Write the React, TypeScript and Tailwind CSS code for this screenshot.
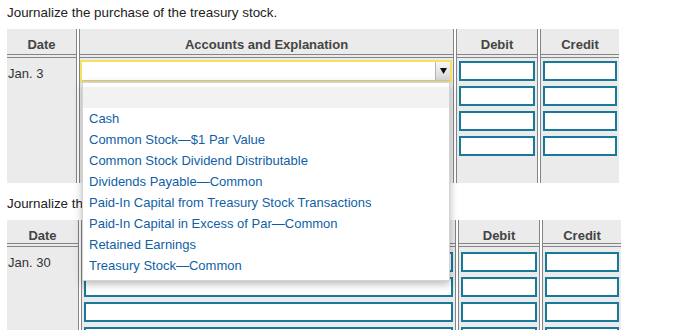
import React from 'react'

const accounts = [
  'Cash',
  'Common Stock\u2014$1 Par Value',
  'Common Stock Dividend Distributable',
  'Dividends Payable\u2014Common',
  'Paid-In Capital from Treasury Stock Transactions',
  'Paid-In Capital in Excess of Par\u2014Common',
  'Retained Earnings',
  'Treasury Stock\u2014Common',
]

const sep = 'border-l-4 border-double border-[#858585]'
const head =
  'border-b-4 border-double border-[#858585] bg-[#ebebeb] pt-[8px] text-center text-[13px] font-bold leading-[15px] text-[#444]'

function Box() {
  return <div className="h-[20px] w-full border-2 border-[#187a9b] bg-white" />
}

function Boxes({ count }: { count: number }) {
  return (
    <div className="flex flex-col gap-[5px] px-[2px]">
      {Array.from({ length: count }).map((_, i) => (
        <Box key={i} />
      ))}
    </div>
  )
}

function AccountSelect() {
  return (
    <div className="relative mr-[1px] h-[23px] border-2 border-[#f8e065]">
      <div className="flex h-[19px] border-b border-[#c8c8c8] bg-white">
        <div className="flex-1" />
        <div className="flex w-[15px] items-center justify-center border-l border-[#b5b5b5] bg-gradient-to-b from-[#f7f7f7] to-[#d6d6d6]">
          <svg width="7" height="6" viewBox="0 0 7 6">
            <path d="M0 0h7L3.5 6z" fill="#111" />
          </svg>
        </div>
      </div>
      <div className="absolute left-0 top-[20px] z-10 w-[368px] border border-[#d4d4d4] bg-white py-[4px] shadow-[0_3px_8px_rgba(0,0,0,0.28)]">
        <div className="h-[21px] bg-[#f2f2f2]" />
        {accounts.map((a) => (
          <div key={a} className="h-[21px] pl-[6px] text-[13px] leading-[21px] text-[#0f5fa6]">
            {a}
          </div>
        ))}
      </div>
    </div>
  )
}

export default function App() {
  return (
    <div className="relative h-[330px] w-[679px] overflow-hidden bg-white font-['Liberation_Sans',Arial,sans-serif] text-[#222]">
      <div className="h-[29px] pl-[7px] pt-[5px] text-[13.4px] leading-[15px]">
        Journalize the purchase of the treasury stock.
      </div>

      <div className="ml-[7px] flex w-[612px]">
        <div className="flex w-[69px] flex-col">
          <div className={`h-[29px] ${head}`}>Date</div>
          <div className="h-[125px] bg-[#ebebeb] pl-[1px] pt-[8px] text-[13px] leading-[15px] text-[#333]">
            Jan. 3
          </div>
        </div>
        <div className={`flex w-[377px] flex-col ${sep}`}>
          <div className={`h-[29px] ${head}`}>Accounts and Explanation</div>
          <div className="h-[125px] bg-[#ebebeb] pt-[2px]">
            <AccountSelect />
          </div>
        </div>
        <div className={`flex w-[84px] flex-col ${sep}`}>
          <div className={`h-[29px] ${head}`}>Debit</div>
          <div className="h-[125px] bg-[#ebebeb] pt-[3px]">
            <Boxes count={4} />
          </div>
        </div>
        <div className={`flex w-[82px] flex-col ${sep}`}>
          <div className={`h-[29px] ${head}`}>Credit</div>
          <div className="h-[125px] bg-[#ebebeb] pt-[3px]">
            <Boxes count={4} />
          </div>
        </div>
      </div>

      <div className="mb-[9px] pl-[7px] pt-[13px] text-[13.4px] leading-[15px]">
        Journalize the sale of the treasury stock.
      </div>

      <div className="ml-[7px] flex w-[614px]">
        <div className="flex w-[71px] flex-col">
          <div className={`h-[27px] ${head}`}>Date</div>
          <div className="h-[120px] bg-[#ebebeb] pl-[1px] pt-[8px] text-[13px] leading-[15px] text-[#333]">
            Jan. 30
          </div>
        </div>
        <div className={`flex w-[377px] flex-col ${sep}`}>
          <div className={`h-[27px] ${head}`}>Accounts and Explanation</div>
          <div className="h-[120px] bg-[#ebebeb] pt-[5px]">
            <Boxes count={4} />
          </div>
        </div>
        <div className={`flex w-[84px] flex-col ${sep}`}>
          <div className={`h-[27px] ${head}`}>Debit</div>
          <div className="h-[120px] bg-[#ebebeb] pt-[5px]">
            <Boxes count={4} />
          </div>
        </div>
        <div className={`flex w-[82px] flex-col ${sep}`}>
          <div className={`h-[27px] ${head}`}>Credit</div>
          <div className="h-[120px] bg-[#ebebeb] pt-[5px]">
            <Boxes count={4} />
          </div>
        </div>
      </div>
    </div>
  )
}
